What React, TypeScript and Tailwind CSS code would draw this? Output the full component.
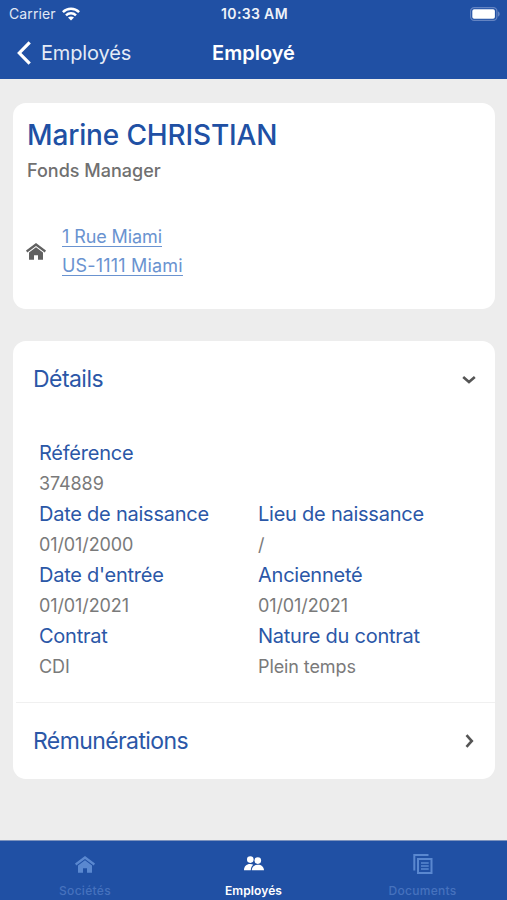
type Field = { label: string; value: string };

const fieldRows: Field[][] = [
  [{ label: "Référence", value: "374889" }],
  [
    { label: "Date de naissance", value: "01/01/2000" },
    { label: "Lieu de naissance", value: "/" },
  ],
  [
    { label: "Date d'entrée", value: "01/01/2021" },
    { label: "Ancienneté", value: "01/01/2021" },
  ],
  [
    { label: "Contrat", value: "CDI" },
    { label: "Nature du contrat", value: "Plein temps" },
  ],
];

function HomeIcon({ className }: { className?: string }) {
  return (
    <svg viewBox="0 0 20 17" className={className} fill="currentColor">
      <path d="M10 0 0 7.500l1.300 1.900L10 2.900l8.700 6.500L20 7.500Z" />
      <path d="M10 4.200 3 9.500V16.700h5v-4.500h4v4.500h5V9.500Z" />
    </svg>
  );
}

function PeopleIcon() {
  return (
    <svg viewBox="0 0 20 15" className="h-[15px] w-5" fill="currentColor">
      <circle cx="6.300" cy="3.600" r="3.300" />
      <path d="M0 14.200c0-3.800 2.400-6.200 6-6.200 1.400 0 2.500.3 3.300.8C7.700 10.100 6.900 12 6.800 14.200Z" />
      <circle cx="13.800" cy="4.600" r="3.300" />
      <path d="M7.800 14.200c.2-3.500 2.300-5.500 6-5.500s5.900 2 6.200 5.500Z" />
    </svg>
  );
}

function DocumentsIcon() {
  return (
    <svg viewBox="0 0 20 20" className="h-5 w-5" fill="none" stroke="currentColor" strokeWidth="2">
      <path d="M1.300 16.500V1.100H15.500" />
      <path d="M5 5H18.500V18.900H5Z" />
      <path d="M8 9h7.700M8 12h7.700M8 15h7.700" strokeWidth="1.500" />
    </svg>
  );
}

function WifiIcon() {
  return (
    <svg viewBox="0 0 18 14" className="h-3.5 w-[18px]" fill="none" stroke="currentColor" strokeWidth="2.5">
      <path d="M.9 5.100C5.400.700 12.600.700 17.100 5.100" />
      <path d="M4 8.300c2.800-2.700 7.200-2.700 10 0" />
      <path d="M9 13.500 6 10.600c1.700-1.500 4.300-1.500 6 0Z" fill="currentColor" stroke="none" />
    </svg>
  );
}

function BatteryIcon() {
  return (
    <svg viewBox="0 0 30 14" className="h-3.5 w-[30px]">
      <rect x=".6" y=".6" width="26.300" height="12.800" rx="3.600" fill="none" stroke="#6484c2" strokeWidth="1.200" />
      <rect x="2.300" y="2.300" width="22.600" height="9.400" rx="1.800" fill="white" />
      <path d="M28 4.500c2.300.6 2.300 4.400 0 5Z" fill="#6484c2" />
    </svg>
  );
}

function Header() {
  return (
    <header className="flex h-[79px] flex-col bg-[#2050a4] text-white">
      <div className="grid h-7 grid-cols-3 items-center pl-[9px] pr-[7px] text-[14px]">
        <div className="flex items-center gap-1.5 pb-px">
          <span className="tracking-[0.1px] text-[#e1e8f5]">Carrier</span>
          <WifiIcon />
        </div>
        <span className="pb-px text-center font-semibold tracking-[0.35px] text-[#eef2f9]">10:33 AM</span>
        <div className="flex justify-end pb-px">
          <BatteryIcon />
        </div>
      </div>
      <div className="grid h-[49px] grid-cols-3 items-center px-[17px] text-[20px]">
        <div className="flex items-center gap-2.5">
          <svg viewBox="0 0 14 24" className="h-6 w-3.5" fill="none" stroke="currentColor" strokeWidth="3.2">
            <path d="M12.700 1.300 2.300 12l10.400 10.700" />
          </svg>
          <span className="tracking-[-0.15px] text-[#e4ebf6]">Employés</span>
        </div>
        <h1 className="text-center font-semibold">Employé</h1>
      </div>
    </header>
  );
}

function TabBar() {
  return (
    <nav className="grid h-[60px] grid-cols-3 border-t border-[#7d93bd] bg-[#2050a4] text-[12px] leading-4 text-[#4672be]">
      <div className="flex flex-col items-center">
        <div className="flex h-[42px] items-center pt-[4px]">
          <HomeIcon className="h-[17px] w-5 text-[#5a88d0]" />
        </div>
        <span className="pl-px font-medium tracking-[0.3px]">Sociétés</span>
      </div>
      <div className="flex flex-col items-center text-white">
        <div className="flex h-[42px] items-center pt-[3px]">
          <PeopleIcon />
        </div>
        <span className="font-semibold tracking-[0.1px]">Employés</span>
      </div>
      <div className="flex flex-col items-center">
        <div className="flex h-[42px] items-center pt-[3px] text-[#5a88d0]">
          <DocumentsIcon />
        </div>
        <span className="font-medium tracking-[0.3px]">Documents</span>
      </div>
    </nav>
  );
}

export default function App() {
  return (
    <div className="flex h-[900px] w-[507px] flex-col overflow-hidden bg-[#ededed] font-['Inter',sans-serif]">
      <Header />

      <main className="flex flex-1 flex-col gap-8 pl-[13px] pr-3 pt-6">
        <section className="h-[206px] rounded-[13px] bg-white px-[13px] pt-3">
          <h2 className="pl-px text-[28px] font-medium leading-10 tracking-[-0.15px] text-[#2050a4]">
            Marine CHRISTIAN
          </h2>
          <p className="pl-px pt-px text-[18px] font-medium leading-[30px] text-[#707070]">Fonds Manager</p>
          <div className="mt-9 flex items-center">
            <HomeIcon className="h-[17px] w-5 text-[#616161]" />
            <div className="ml-4 flex flex-col items-start text-[18px] leading-[29px] text-[#6a93d0] underline decoration-1 underline-offset-[3px]">
              <a className="tracking-[-0.1px]">1 Rue Miami</a>
              <a className="tracking-[0.18px]">US-1111 Miami</a>
            </div>
          </div>
        </section>

        <section className="flex h-[438px] flex-col rounded-[13px] bg-white">
          <div className="flex h-[76px] items-center justify-between pl-5 pr-[19px]">
            <h3 className="pt-px text-[23px] tracking-[-0.55px] text-[#2b57a7]">Détails</h3>
            <svg viewBox="0 0 14 9" className="h-[9px] w-3.5" fill="none" stroke="#555555" strokeWidth="2.6">
              <path d="M1.200 2 7 7l5.800-5" />
            </svg>
          </div>

          <div className="flex-1 pl-[26px] pt-[21px]">
            {fieldRows.map((row) => (
              <div key={row[0].label} className="grid grid-cols-[219px_1fr]">
                {row.map((field) => (
                  <div key={field.label} className="leading-[30.5px]">
                    <p className="text-[20px] tracking-[-0.24px] text-[#2b57a7]">{field.label}</p>
                    <p className="text-[18px] tracking-[-0.1px] text-[#7a7a7a]">{field.value}</p>
                  </div>
                ))}
              </div>
            ))}
          </div>

          <div className="ml-[3px] flex h-[77px] items-center justify-between border-t border-[#f0f0f0] pl-[17px] pr-[21px]">
            <h3 className="text-[23px] tracking-[-0.6px] text-[#2b57a7]">Rémunérations</h3>
            <svg viewBox="0 0 9 14" className="h-3.5 w-[9px]" fill="none" stroke="#555555" strokeWidth="2.6">
              <path d="M1.500 1.200 6.800 7l-5.300 5.800" />
            </svg>
          </div>
        </section>
      </main>

      <TabBar />
    </div>
  );
}
